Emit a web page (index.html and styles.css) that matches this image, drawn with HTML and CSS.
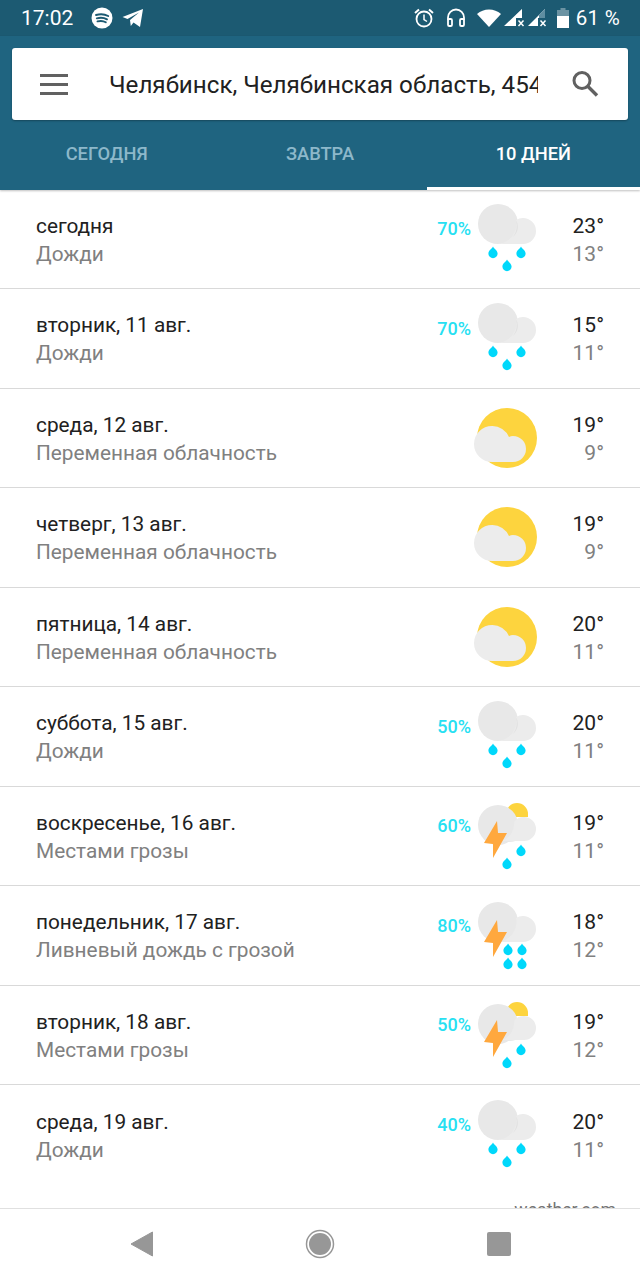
FILE: index.html
```html
<!DOCTYPE html>
<html lang="ru">
<head>
    <meta charset="UTF-8">
    <meta name="viewport" content="width=device-width, initial-scale=1.0">
    <title>Погода на 10 дней</title>
    <link rel="stylesheet" href="styles.css">
</head>
<body>
    <svg class="sprites" width="0" height="0">
        <defs>
            <path id="drop" d="M0 -6.5 C1.2 -4 4.6 -2.6 4.6 0.6 A4.6 4.6 0 0 1 -4.6 0.6 C-4.6 -2.6 -1.2 -4 0 -6.5Z" fill="#00d8fb"/>
            <g id="cloud">
                <circle cx="26" cy="29" r="20" fill="#e8e8e8"/>
                <path d="M26 49 H51 A12.500 12.500 0 0 0 51 23 A13 13 0 0 0 44 25 A20 20 0 0 1 26 49Z" fill="#ececec"/>
                <path d="M44 25 A20 20 0 0 1 41 42 A13 13 0 0 0 44 25Z" fill="#e2e2e2"/>
            </g>
            <path id="bolt" d="M25 29 L12 51 L21 52 L21 66 L35 41 L26 41Z" fill="#ffa83e"/>
            <symbol id="rain" viewBox="0 0 70 80">
                <use href="#cloud"/>
                <use href="#drop" x="21" y="58"/>
                <use href="#drop" x="49" y="58"/>
                <use href="#drop" x="35" y="71"/>
            </symbol>
            <symbol id="partly" viewBox="0 0 70 80">
                <circle cx="35" cy="44" r="30" fill="#fdd43e"/>
                <path d="M20 32 A18 18 0 0 1 37 43 A13 13 0 0 1 41 42 A13 13 0 0 1 41 68 H20 A18 18 0 0 1 20 32Z" fill="#ececec"/>
            </symbol>
            <symbol id="storm-sun" viewBox="0 0 70 80">
                <path d="M34 22 A11 11 0 0 1 56 22 V25 H34Z" fill="#fdd43e"/>
                <circle cx="26" cy="33" r="20" fill="#e8e8e8"/>
                <circle cx="38" cy="38" r="12" fill="#e8e8e8"/>
                <path d="M30 49 H52 A12 12 0 0 0 52 25 A12 12 0 0 0 42 30 A18 18 0 0 1 30 49Z" fill="#ececec"/>
                <use href="#bolt"/>
                <use href="#drop" x="49" y="59"/>
                <use href="#drop" x="35" y="72"/>
            </symbol>
            <symbol id="storm-heavy" viewBox="0 0 70 80">
                <circle cx="26" cy="31" r="20" fill="#e8e8e8"/>
                <path d="M26 51 H51 A13 13 0 0 0 51 25 A13 13 0 0 0 44 27 A20 20 0 0 1 26 51Z" fill="#ececec"/>
                <use href="#bolt"/>
                <use href="#drop" x="36" y="59"/>
                <use href="#drop" x="50" y="59"/>
                <use href="#drop" x="36" y="73"/>
                <use href="#drop" x="50" y="73"/>
            </symbol>
        </defs>
    </svg>

    <div class="statusbar">
        <span class="clock">17:02</span>
        <svg class="sb-spotify" width="22" height="22" viewBox="0 0 22 22">
            <circle cx="11" cy="11" r="10.500" fill="#fff"/>
            <path d="M5 8 C9 6.800 13.500 7 17.200 9 M5.800 11.300 C9.500 10.300 13 10.600 16 12.300 M6.500 14.400 C9.500 13.600 12.500 13.900 14.800 15.300" fill="none" stroke="#1c5a72" stroke-width="1.900" stroke-linecap="round"/>
        </svg>
        <svg class="sb-telegram" width="22" height="20" viewBox="0 0 22 20">
            <path d="M21 1 L18 19 L11.500 14.500 L8.800 18 L8 12 L17 4.500 L5.500 11 L0.500 9Z" fill="#fff"/>
        </svg>
        <span class="sb-right">
            <svg width="22" height="22" viewBox="0 0 22 22" fill="none" stroke="#fff" stroke-width="1.800">
                <circle cx="11" cy="12" r="7.500"/>
                <path d="M11 7.500 V12.500 L14 14.500" stroke-width="1.500"/>
                <path d="M2 6 L6 2.500 M20 6 L16 2.500" stroke-width="2"/>
            </svg>
            <svg class="sb-phones" width="20" height="20" viewBox="0 0 20 20" fill="none" stroke="#fff" stroke-width="1.800">
                <path d="M2 12 V9.500 A8 8 0 0 1 18 9.500 V12"/>
                <rect x="2" y="11" width="4" height="7" rx="1.300"/>
                <rect x="14" y="11" width="4" height="7" rx="1.300"/>
            </svg>
            <svg class="sb-wifi" width="24" height="18" viewBox="0 0 24 18">
                <path d="M0 5 A18 18 0 0 1 24 5 L12 18Z" fill="#fff"/>
            </svg>
            <svg class="sb-signal" width="26" height="20" viewBox="0 0 26 20">
                <path d="M0 18 L18 1 V10 H12 V18Z" fill="#fff"/>
                <path d="M18 1 V10 H12 V7Z" fill="#fff" opacity=".4"/>
                <path d="M14.500 12.500 L19.500 18 M19.500 12.500 L14.500 18" stroke="#fff" stroke-width="1.500"/>
            </svg>
            <svg class="sb-signal2" width="20" height="20" viewBox="0 0 20 20">
                <path d="M0 18 L17 1 V10 H10 V18Z" fill="#fff"/>
                <path d="M17 1 V10 H11 V7Z" fill="#5f8ea1"/>
                <path d="M12.500 12.500 L17.500 18 M17.500 12.500 L12.500 18" stroke="#fff" stroke-width="1.500"/>
            </svg>
            <svg class="sb-battery" width="12" height="20" viewBox="0 0 12 20">
                <path d="M3.500 0 H8.500 V2 H12 V20 H0 V2 H3.500Z" fill="#fff" opacity=".35"/>
                <path d="M0 8 H12 V20 H0Z" fill="#fff"/>
            </svg>
            <span class="battery-text">61 %</span>
        </span>
    </div>

    <div class="appbar">
        <div class="searchcard">
            <span class="menu-icon"><i></i><i></i><i></i></span>
            <div class="place">Челябинск, Челябинская область, 454000</div>
            <svg class="search-icon" width="28" height="28" viewBox="0 0 28 28" fill="none" stroke="#616161">
                <circle cx="11" cy="10.500" r="8" stroke-width="3"/>
                <path d="M17 16.500 L26 25.500" stroke-width="3.400"/>
            </svg>
        </div>
        <div class="tabs">
            <div class="tab">СЕГОДНЯ</div>
            <div class="tab">ЗАВТРА</div>
            <div class="tab active">10 ДНЕЙ</div>
        </div>
    </div>

    <div class="days">
        <div class="day">
            <div class="day-text"><div class="day-name">сегодня</div><div class="day-desc">Дожди</div></div>
            <div class="pct">70%</div>
            <svg class="wicon"><use href="#rain"/></svg>
            <div class="temps"><div class="hi">23°</div><div class="lo">13°</div></div>
        </div>
        <div class="day">
            <div class="day-text"><div class="day-name">вторник, 11 авг.</div><div class="day-desc">Дожди</div></div>
            <div class="pct">70%</div>
            <svg class="wicon"><use href="#rain"/></svg>
            <div class="temps"><div class="hi">15°</div><div class="lo">11°</div></div>
        </div>
        <div class="day">
            <div class="day-text"><div class="day-name">среда, 12 авг.</div><div class="day-desc">Переменная облачность</div></div>
            <svg class="wicon"><use href="#partly"/></svg>
            <div class="temps"><div class="hi">19°</div><div class="lo">9°</div></div>
        </div>
        <div class="day">
            <div class="day-text"><div class="day-name">четверг, 13 авг.</div><div class="day-desc">Переменная облачность</div></div>
            <svg class="wicon"><use href="#partly"/></svg>
            <div class="temps"><div class="hi">19°</div><div class="lo">9°</div></div>
        </div>
        <div class="day">
            <div class="day-text"><div class="day-name">пятница, 14 авг.</div><div class="day-desc">Переменная облачность</div></div>
            <svg class="wicon"><use href="#partly"/></svg>
            <div class="temps"><div class="hi">20°</div><div class="lo">11°</div></div>
        </div>
        <div class="day">
            <div class="day-text"><div class="day-name">суббота, 15 авг.</div><div class="day-desc">Дожди</div></div>
            <div class="pct">50%</div>
            <svg class="wicon"><use href="#rain"/></svg>
            <div class="temps"><div class="hi">20°</div><div class="lo">11°</div></div>
        </div>
        <div class="day">
            <div class="day-text"><div class="day-name">воскресенье, 16 авг.</div><div class="day-desc">Местами грозы</div></div>
            <div class="pct">60%</div>
            <svg class="wicon"><use href="#storm-sun"/></svg>
            <div class="temps"><div class="hi">19°</div><div class="lo">11°</div></div>
        </div>
        <div class="day">
            <div class="day-text"><div class="day-name">понедельник, 17 авг.</div><div class="day-desc">Ливневый дождь с грозой</div></div>
            <div class="pct">80%</div>
            <svg class="wicon"><use href="#storm-heavy"/></svg>
            <div class="temps"><div class="hi">18°</div><div class="lo">12°</div></div>
        </div>
        <div class="day">
            <div class="day-text"><div class="day-name">вторник, 18 авг.</div><div class="day-desc">Местами грозы</div></div>
            <div class="pct">50%</div>
            <svg class="wicon"><use href="#storm-sun"/></svg>
            <div class="temps"><div class="hi">19°</div><div class="lo">12°</div></div>
        </div>
        <div class="day last">
            <div class="day-text"><div class="day-name">среда, 19 авг.</div><div class="day-desc">Дожди</div></div>
            <div class="pct">40%</div>
            <svg class="wicon"><use href="#rain"/></svg>
            <div class="temps"><div class="hi">20°</div><div class="lo">11°</div></div>
        </div>
        <div class="source">weather.com</div>
    </div>

    <div class="navbar">
        <svg width="24" height="26" viewBox="0 0 24 26"><path d="M22.500 1 V25 L1 13Z" fill="#979797" stroke="#979797" stroke-linejoin="round"/></svg>
        <svg width="30" height="30" viewBox="0 0 30 30">
            <circle cx="15" cy="15" r="13.500" fill="none" stroke="#979797" stroke-width="1.500"/>
            <circle cx="15" cy="15" r="11" fill="#979797"/>
        </svg>
        <svg width="24" height="24" viewBox="0 0 24 24"><rect width="24" height="24" rx="2" fill="#979797"/></svg>
    </div>
</body>
</html>
```

FILE: styles.css
```css
html, body {
    margin: 0;
    height: 1280px;
    overflow: hidden;
}

body {
    display: flex;
    flex-direction: column;
    background-color: #fff;
    font-family: Roboto, sans-serif;
    color: #212121;
}

.sprites {
    display: block;
    height: 0;
}

.statusbar {
    display: flex;
    align-items: center;
    flex: none;
    height: 36px;
    padding: 0 20px 0 21px;
    background-color: #1c5a72;
    color: #fff;
}

.clock {
    font-size: 21px;
    width: 70px;
}

.sb-spotify {
    margin-right: 10px;
}

.sb-telegram {
    margin-left: -1px;
}

.sb-right {
    display: flex;
    align-items: center;
    margin-left: auto;
}

.sb-phones {
    margin-left: 11px;
}

.sb-wifi {
    margin-left: 11px;
}

.sb-signal {
    margin-left: 3px;
}

.sb-signal2 {
    margin-left: -2px;
}

.sb-battery {
    margin-left: 9px;
}

.battery-text {
    margin-left: 7px;
    font-size: 20.5px;
    letter-spacing: 0.3px;
}

.appbar {
    flex: none;
    height: 154px;
    padding-top: 12px;
    box-sizing: border-box;
    background-color: #1f6480;
    box-shadow: 0 1px 2px rgba(0, 0, 0, 0.25);
    position: relative;
    z-index: 1;
    display: flex;
    flex-direction: column;
}

.searchcard {
    display: flex;
    align-items: center;
    height: 72px;
    margin: 0 12px;
    padding: 0 29px 0 28px;
    background-color: #fff;
    border-radius: 3px;
    box-shadow: 0 1px 2px rgba(0, 0, 0, 0.3);
}

.menu-icon {
    display: flex;
    flex-direction: column;
    gap: 6px;
    width: 28px;
    margin-right: 41px;
    flex: none;
}

.menu-icon i {
    display: block;
    height: 3px;
    background-color: #616161;
}

.place {
    flex: 1;
    overflow: hidden;
    white-space: nowrap;
    font-size: 24.2px;
    padding-top: 2px;
    margin-right: 33px;
}

.search-icon {
    flex: none;
}

.tabs {
    display: flex;
    flex: 1;
}

.tab {
    flex: 1;
    display: flex;
    align-items: center;
    justify-content: center;
    font-size: 18.3px;
    font-weight: 500;
    color: #8db8ca;
    box-sizing: border-box;
    border-bottom: 3px solid transparent;
}

.tab.active {
    color: #fff;
    border-bottom-color: #fff;
}

.days {
    flex: 1;
    overflow: hidden;
    padding-top: 0;
    margin-top: -0.4px;
}

.day {
    display: flex;
    align-items: center;
    height: 99.5px;
    box-sizing: border-box;
    padding: 0 36px 0 36px;
    border-bottom: 1px solid #d9d9d9;
}

.day.last {
    border-bottom: none;
}

.day-text {
    flex: 1;
    font-size: 20.8px;
    line-height: 28px;
    margin-top: 2px;
}

.day-desc {
    color: #808080;
}

.pct {
    font-size: 18px;
    font-weight: 500;
    color: #27e0f2;
    margin: 0 1px 20px 0;
}

.wicon {
    flex: none;
    width: 70px;
    height: 80px;
    margin-bottom: 8px;
}

.temps {
    width: 62px;
    text-align: right;
    font-size: 21px;
    line-height: 28px;
    margin-top: 2px;
}

.lo {
    color: #808080;
}

.source {
    margin-top: 15px;
    padding-right: 24px;
    text-align: right;
    font-size: 17.7px;
    color: #757575;
}

.navbar {
    flex: none;
    height: 72px;
    box-sizing: border-box;
    border-top: 1px solid #e0e0e0;
    background-color: #fff;
    display: flex;
    align-items: center;
    justify-content: center;
    gap: 151.5px;
    padding-bottom: 2px;
}
```
